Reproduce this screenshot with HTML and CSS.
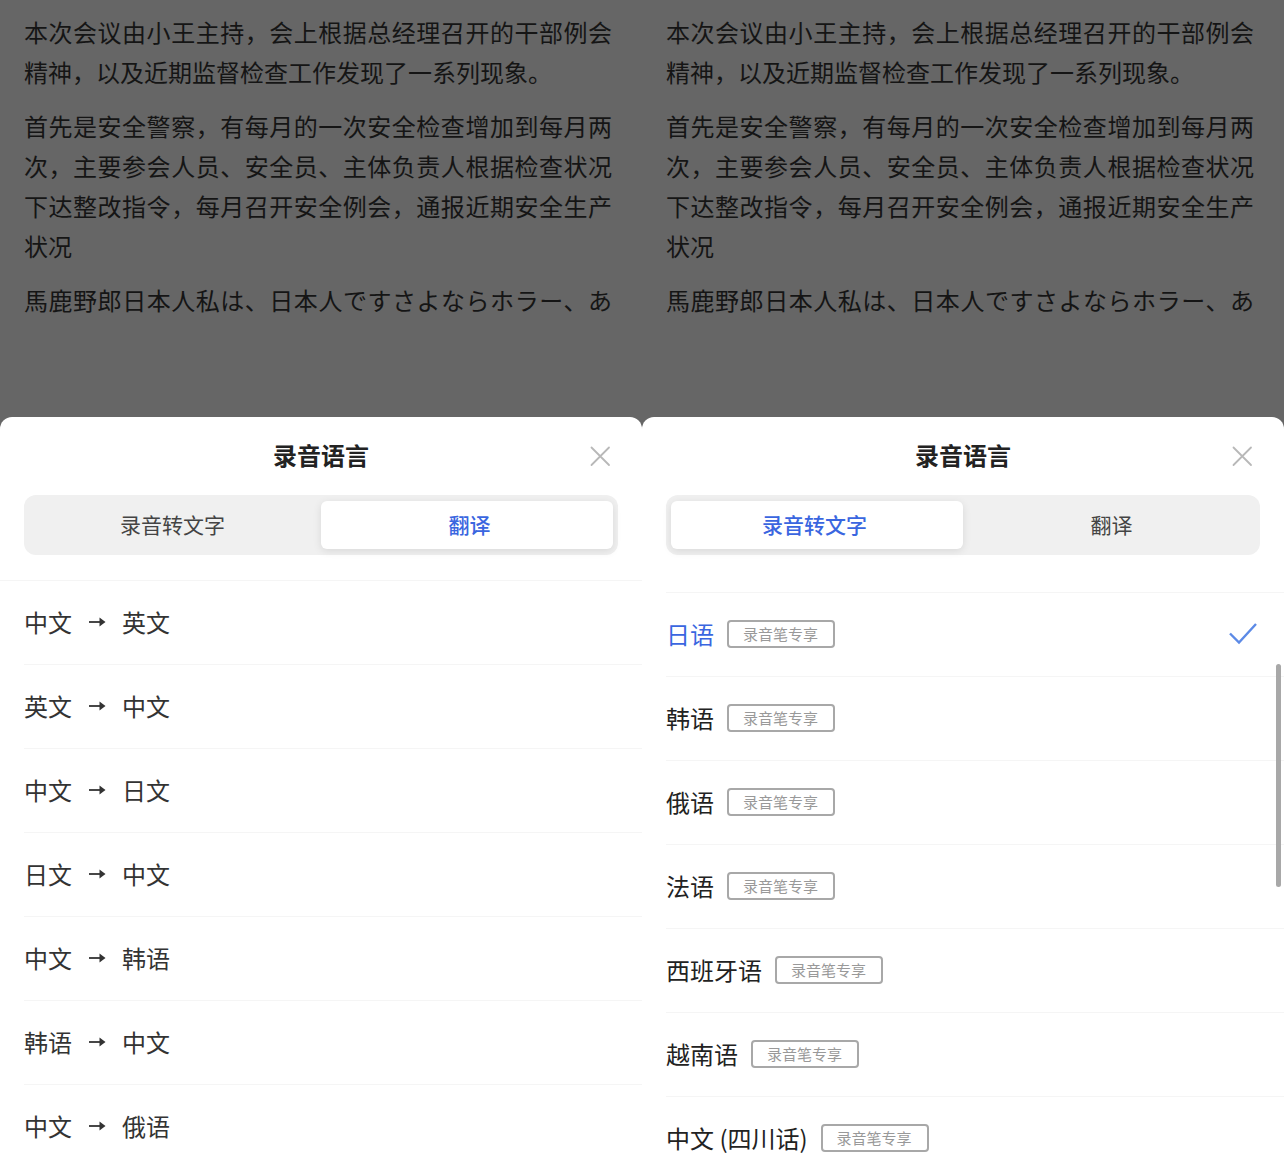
FILE: index.html
```html
<!DOCTYPE html>
<html lang="zh-CN">
<head>
<meta charset="utf-8">
<meta name="viewport" content="width=device-width, initial-scale=1">
<title>录音语言</title>
<link rel="stylesheet" href="styles.css">
</head>
<body>
<svg class="sprite" aria-hidden="true">
  <symbol id="close" viewBox="0 0 24 24"><path d="M3.500 3.500L21 21M21 3.500L3.500 21"/></symbol>
  <symbol id="arrow" viewBox="0 0 18 12"><path d="M1 6H15" fill="none" stroke="currentColor" stroke-width="1.800"/><path d="M11.500 1.500L17.500 6L11.500 10.500Z" fill="currentColor"/></symbol>
</svg>
<main class="screens">
  <section class="screen">
    <article class="transcript">
      <p>本次会议由小王主持，会上根据总经理召开的干部例会精神，以及近期监督检查工作发现了一系列现象。</p>
      <p>首先是安全警察，有每月的一次安全检查增加到每月两次，主要参会人员、安全员、主体负责人根据检查状况下达整改指令，每月召开安全例会，通报近期安全生产状况</p>
      <p class="full" lang="ja">馬鹿野郎日本人私は、日本人ですさよならホラー、あ</p>
    </article>
    <div class="sheet">
      <header class="head">
        <h2>录音语言</h2>
        <button class="close" type="button" aria-label="关闭"><svg><use href="#close"/></svg></button>
      </header>
      <div class="tabs" role="tablist">
        <button class="tab" type="button" role="tab" aria-selected="false">录音转文字</button>
        <button class="tab active" type="button" role="tab" aria-selected="true">翻译</button>
      </div>
      <div class="panel">
        <ul class="list pairs">
          <li><button class="row" type="button">中文<svg class="arrow"><use href="#arrow"/></svg>英文</button></li>
          <li><button class="row" type="button">英文<svg class="arrow"><use href="#arrow"/></svg>中文</button></li>
          <li><button class="row" type="button">中文<svg class="arrow"><use href="#arrow"/></svg>日文</button></li>
          <li><button class="row" type="button">日文<svg class="arrow"><use href="#arrow"/></svg>中文</button></li>
          <li><button class="row" type="button">中文<svg class="arrow"><use href="#arrow"/></svg>韩语</button></li>
          <li><button class="row" type="button">韩语<svg class="arrow"><use href="#arrow"/></svg>中文</button></li>
          <li><button class="row" type="button">中文<svg class="arrow"><use href="#arrow"/></svg>俄语</button></li>
        </ul>
      </div>
    </div>
  </section>
  <section class="screen">
    <article class="transcript">
      <p>本次会议由小王主持，会上根据总经理召开的干部例会精神，以及近期监督检查工作发现了一系列现象。</p>
      <p>首先是安全警察，有每月的一次安全检查增加到每月两次，主要参会人员、安全员、主体负责人根据检查状况下达整改指令，每月召开安全例会，通报近期安全生产状况</p>
      <p class="full" lang="ja">馬鹿野郎日本人私は、日本人ですさよならホラー、あ</p>
    </article>
    <div class="sheet">
      <header class="head">
        <h2>录音语言</h2>
        <button class="close" type="button" aria-label="关闭"><svg><use href="#close"/></svg></button>
      </header>
      <div class="tabs" role="tablist">
        <button class="tab active" type="button" role="tab" aria-selected="true">录音转文字</button>
        <button class="tab" type="button" role="tab" aria-selected="false">翻译</button>
      </div>
      <div class="panel">
        <ul class="list langs">
          <li><button class="row selected" type="button">日语<span class="badge">录音笔专享</span><svg class="check" viewBox="0 0 30 24"><path d="M2 11.500L11 20.500L28 2"/></svg></button></li>
          <li><button class="row" type="button">韩语<span class="badge">录音笔专享</span></button></li>
          <li><button class="row" type="button">俄语<span class="badge">录音笔专享</span></button></li>
          <li><button class="row" type="button">法语<span class="badge">录音笔专享</span></button></li>
          <li><button class="row" type="button">西班牙语<span class="badge">录音笔专享</span></button></li>
          <li><button class="row" type="button">越南语<span class="badge">录音笔专享</span></button></li>
          <li><button class="row" type="button">中文 (四川话)<span class="badge">录音笔专享</span></button></li>
        </ul>
        <div class="thumb"></div>
      </div>
    </div>
  </section>
</main>
</body>
</html>
```
FILE: styles.css
```css
* {
  box-sizing: border-box;
}

body {
  margin: 0;
  background: #666;
  font-family: "Noto Sans CJK SC", sans-serif;
  font-size: 24px;
}

button {
  margin: 0;
  padding: 0;
  border: 0;
  background: none;
  color: inherit;
  font: inherit;
}

.sprite {
  display: none;
}

.screens {
  display: grid;
  grid-template-columns: 1fr 1fr;
  height: 100vh;
}

.screen {
  display: flex;
  flex-direction: column;
  min-width: 0;
  min-height: 0;
}

.transcript {
  display: flex;
  flex-direction: column;
  gap: 14px;
  padding: 12px 30px 97px 24px;
  color: #151515;
  line-height: 40px;
  text-align: justify;
}

.transcript p {
  margin: 0;
}

.transcript .full {
  text-align-last: justify;
}

.sheet {
  display: flex;
  flex: 1;
  flex-direction: column;
  min-height: 0;
  border-radius: 12px 12px 0 0;
  background: #fff;
}

.head {
  display: grid;
  grid-template-columns: 1fr auto 1fr;
  align-items: center;
  height: 78px;
  padding: 0 30px;
}

.head h2 {
  grid-column: 2;
  margin: 0;
  padding-bottom: 4px;
  color: #222;
  font-size: 24px;
  font-weight: 700;
}

.close {
  justify-self: end;
  width: 24px;
  height: 24px;
}

.close svg {
  display: block;
  width: 24px;
  height: 24px;
  stroke: #b8b8b8;
  stroke-width: 1.8;
  stroke-linecap: round;
}

.tabs {
  display: grid;
  grid-template-columns: 1fr 1fr;
  flex: none;
  height: 60px;
  margin: 0 24px 25px;
  padding: 6px 5px;
  border-radius: 12px;
  background: #f0f0f0;
}

.tab {
  padding: 0 5px 2px 0;
  border-radius: 6px;
  color: #444;
  font-size: 21px;
}

.tab:last-child {
  padding: 0 0 2px 5px;
}

.tab.active {
  background: #fff;
  box-shadow: 0 2px 8px rgba(0, 0, 0, .1);
  color: #3a66e0;
  font-weight: 500;
}

.panel {
  position: relative;
  flex: 1;
  min-height: 0;
  overflow: hidden;
}

.list {
  margin: 0;
  padding: 0;
  list-style: none;
}

.list li {
  height: 84px;
  margin-left: 24px;
  border-bottom: 1px solid #f5f5f5;
}

.pairs {
  border-top: 1px solid #f5f5f5;
  color: #333;
}

.langs {
  padding-top: 12px;
  color: #222;
}

.langs li:first-child {
  height: 85px;
  border-top: 1px solid #f5f5f5;
}

.row {
  display: flex;
  align-items: center;
  width: 100%;
  height: 100%;
  padding: 0 26px 2px 0;
  text-align: left;
}

.row.selected {
  color: #3a66e0;
}

.arrow {
  width: 18px;
  height: 12px;
  margin: 0 16px;
}

.badge {
  margin-left: 13px;
  padding: 0 15px 0 14px;
  border: 2px solid #a8a8a8;
  border-radius: 4px;
  color: #999;
  font-size: 15px;
  line-height: 24px;
}

.check {
  width: 30px;
  height: 24px;
  margin-left: auto;
  fill: none;
  stroke: #5c8ae6;
  stroke-width: 2.4;
}

.thumb {
  position: absolute;
  top: 84px;
  right: 3px;
  width: 5px;
  height: 223px;
  border-radius: 3px;
  background: #a8a8a8;
}
```
